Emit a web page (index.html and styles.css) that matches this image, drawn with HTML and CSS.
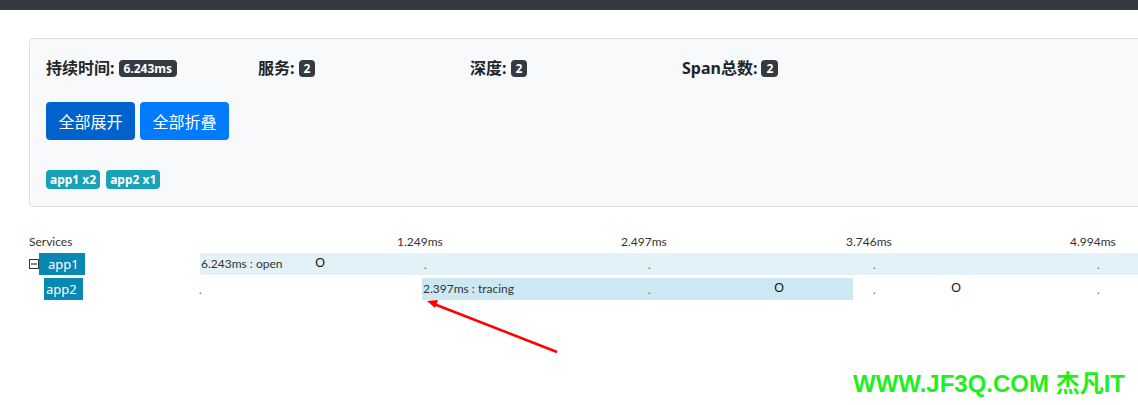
FILE: index.html
```html
<!DOCTYPE html>
<html lang="zh">
<head>
<meta charset="utf-8">
<link rel="stylesheet" href="styles.css">
</head>
<body>
<div class="topbar"></div>
<main class="page">
  <section class="card">
    <div class="stats">
      <div class="stat">持续时间: <span class="badge">6.243ms</span></div>
      <div class="stat">服务: <span class="badge">2</span></div>
      <div class="stat">深度: <span class="badge">2</span></div>
      <div class="stat">Span总数: <span class="badge">2</span></div>
    </div>
    <div class="buttons">
      <button class="btn btn-active">全部展开</button>
      <button class="btn">全部折叠</button>
    </div>
    <div class="tags">
      <span class="tag">app1 x2</span>
      <span class="tag">app2 x1</span>
    </div>
  </section>

  <section class="timeline">
    <div class="tl-head">
      <div class="svc-col">Services</div>
      <div class="canvas">
        <span class="tick" style="left:197px">1.249ms</span>
        <span class="tick" style="left:421px">2.497ms</span>
        <span class="tick" style="left:646px">3.746ms</span>
        <span class="tick" style="left:870px">4.994ms</span>
      </div>
    </div>
    <div class="tl-row">
      <div class="svc-col">
        <svg class="toggle" width="10" height="10" viewBox="0 0 10 10"><rect x="0.5" y="0.5" width="9" height="9" fill="#fff" stroke="#333"/><line x1="2" y1="5" x2="8" y2="5" stroke="#111" stroke-width="1"/></svg>
        <span class="svc">app1</span>
      </div>
      <div class="canvas row-bg">
        <span class="bar bar-root" style="left:0;width:1120px">6.243ms : open</span>
        <span class="mark" style="left:115px">O</span>
        <span class="dot" style="left:224px">.</span>
        <span class="dot" style="left:448px">.</span>
        <span class="dot" style="left:673px">.</span>
        <span class="dot" style="left:897px">.</span>
      </div>
    </div>
    <div class="tl-row">
      <div class="svc-col child">
        <span class="svc">app2</span>
      </div>
      <div class="canvas">
        <span class="dot" style="left:-1px">.</span>
        <span class="bar bar-child" style="left:222px;width:431px">2.397ms : tracing</span>
        <span class="mark" style="left:574px">O</span>
        <span class="dot" style="left:448px">.</span>
        <span class="dot" style="left:673px">.</span>
        <span class="mark" style="left:751px">O</span>
        <span class="dot" style="left:897px">.</span>
      </div>
    </div>
  </section>
</main>
<svg class="arrow" width="1138" height="405" viewBox="0 0 1138 405">
  <line x1="557" y1="352" x2="434" y2="304" stroke="#ff0000" stroke-width="2.5"/>
  <polygon points="427,301 438,300 435,308" fill="#ff0000"/>
</svg>
<div class="watermark">WWW.JF3Q.COM 杰凡IT</div>
</body>
</html>
```

FILE: styles.css
```css
html, body {
  margin: 0;
  padding: 0;
  background: #fff;
  overflow: hidden;
  width: 1138px;
  height: 405px;
}
body {
  font-family: "Noto Sans", "Noto Sans CJK SC", sans-serif;
  color: #212529;
  position: relative;
}
.topbar {
  height: 10px;
  background: #343a40;
}
.page {
  padding: 28px 0 0 29px;
  overflow: hidden;
  height: 367px;
  box-sizing: border-box;
}
.card {
  box-sizing: border-box;
  width: 1130px;
  margin-right: -21px;
  height: 169px;
  background: #f8f9fa;
  border: 1px solid #dcdee2;
  border-radius: 4px;
  padding: 17px 16px 0 16px;
}
.stats {
  display: grid;
  grid-template-columns: 212px 212px 212px 212px;
  height: 24px;
  align-items: center;
}
.stat {
  font-weight: 700;
  font-size: 16px;
  line-height: 24px;
  color: #212529;
  display: flex;
  align-items: center;
  gap: 4px;
  white-space: nowrap;
}
.badge {
  display: inline-block;
  background: #343a40;
  color: #fff;
  font-size: 12px;
  font-weight: 700;
  line-height: 13px;
  padding: 2px 5px;
  border-radius: 4px;
  font-family: "Noto Sans", sans-serif;
}
.buttons {
  display: flex;
  gap: 5px;
  margin-top: 22px;
}
.btn {
  box-sizing: border-box;
  height: 38px;
  width: 89px;
  border: none;
  border-radius: 4px;
  background: #007bff;
  color: #fff;
  font-family: "Noto Sans CJK SC", sans-serif;
  font-size: 16px;
  padding: 0;
  line-height: 38px;
}
.btn-active {
  background: #0062cc;
}
.tags {
  display: flex;
  gap: 6px;
  margin-top: 30px;
}
.tag {
  display: inline-block;
  background: #17a2b8;
  color: #fff;
  font-size: 12px;
  font-weight: 700;
  line-height: 13px;
  padding: 3px 4px;
  border-radius: 4px;
}
.timeline {
  margin-top: 25px;
  font-family: "Lato", "Noto Sans", sans-serif;
  font-size: 12px;
  color: #333;
}
.tl-head, .tl-row {
  display: flex;
  height: 22px;
}
.tl-head {
  height: 19px;
  margin-bottom: 2px;
}
.tl-row + .tl-row {
  margin-top: 3px;
}
.svc-col {
  width: 171px;
  flex: none;
  display: flex;
  align-items: center;
  line-height: 19px;
}
.svc-col.child {
  padding-left: 15px;
  box-sizing: border-box;
}
.toggle {
  display: block;
  flex: none;
}
.svc {
  display: inline-flex;
  align-items: center;
  height: 22px;
  background: #0a88b4;
  color: #fff;
  font-size: 13px;
  padding: 0 6px 0 9px;
  font-family: "Noto Sans", sans-serif;
}
.child .svc {
  padding: 0 6px 0 2px;
}
.canvas {
  position: relative;
  flex: 1;
  height: 100%;
  line-height: 22px;
}
.tl-head .canvas {
  line-height: 19px;
}
.row-bg {
  background: #e3f2f8;
}
.tick {
  position: absolute;
  top: 0;
  white-space: nowrap;
}
.bar {
  position: absolute;
  top: 0;
  height: 22px;
  white-space: nowrap;
  box-sizing: border-box;
  padding-left: 1px;
}
.bar-root {
  background: #e3f2f8;
}
.bar-child {
  background: #cce9f3;
}
.dot {
  position: absolute;
  top: 1px;
  font-size: 11px;
  color: #555;
}
.mark {
  position: absolute;
  top: -2px;
  font-size: 13px;
  color: #111;
  font-family: "Noto Sans", sans-serif;
}
.arrow {
  position: absolute;
  left: 0;
  top: 0;
  pointer-events: none;
}
.watermark {
  position: absolute;
  left: 853px;
  top: 370px;
  font-family: "Liberation Sans", "Noto Sans CJK SC", sans-serif;
  font-weight: 700;
  font-size: 24px;
  line-height: 28px;
  color: #1ef01e;
  white-space: nowrap;
}
```
